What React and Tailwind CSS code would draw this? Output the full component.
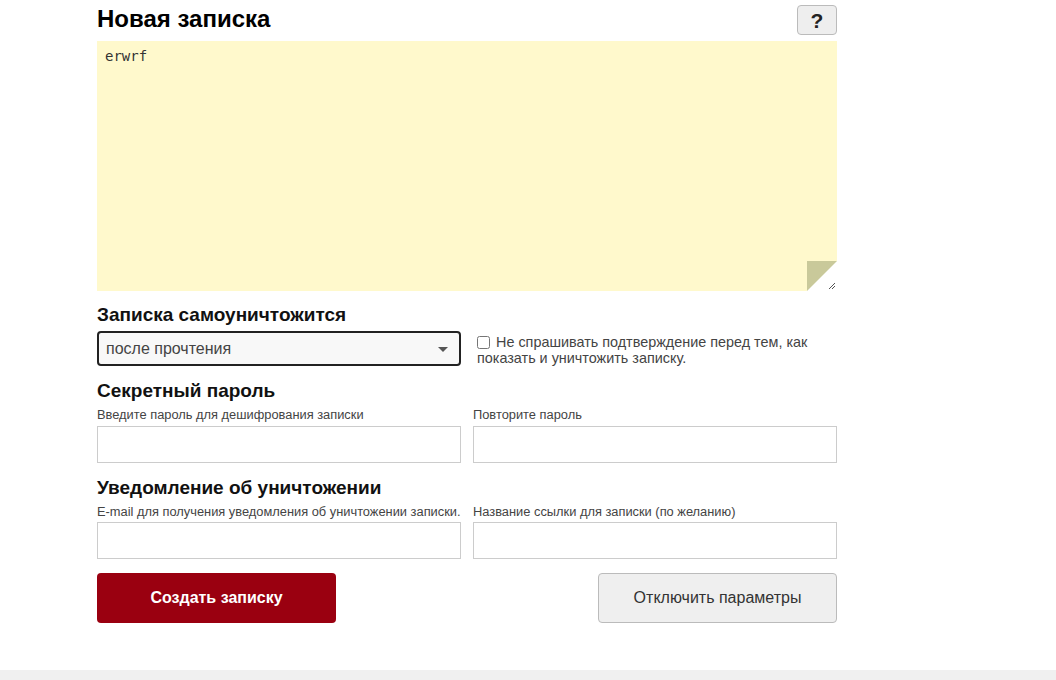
import { useState } from "react";

const App = () => {
  const [text, setText] = useState("erwrf");

  return (
    <div className="min-h-[680px] bg-[#f0f0f0] font-['Liberation_Sans',Arial,sans-serif]">
      <div className="bg-white h-[670px]">
        <div className="w-[740px] ml-[97px] pt-[5px]">
          <div className="flex items-start justify-between h-[36px]">
            <h1 className="text-[24px] font-bold text-black leading-[28px]">Новая записка</h1>
            <button className="w-[40px] h-[30px] rounded-[4px] border border-[#bbb] bg-[#eee] text-[21px] font-bold text-[#222] leading-none">?</button>
          </div>
          <div className="relative h-[250px] bg-[#fff9cc]">
            <textarea
              value={text}
              onChange={(e) => setText(e.target.value)}
              className="w-full h-full resize-none bg-transparent px-[8px] py-[5px] text-[14px] text-[#333] font-['DejaVu_Sans_Mono',monospace] outline-none"
            />
            <div className="absolute right-0 bottom-0 w-[30px] h-[30px] bg-white">
              <div className="w-full h-full bg-[#c9c99a] [clip-path:polygon(0_0,100%_0,0_100%)]"></div>
            </div>
            <svg className="absolute right-[1px] bottom-[1px]" width="9" height="9" viewBox="0 0 9 9">
              <path d="M8 2 L2 8 M8 5 L5 8" stroke="#555" strokeWidth="1" />
            </svg>
          </div>

          <h2 className="mt-[12px] text-[19px] font-bold text-[#111] leading-[24px]">Записка самоуничтожится</h2>
          <div className="flex gap-[12px] mt-[4px]">
            <div className="relative w-[364px] h-[35px] border-2 border-[#222] rounded-[4px] bg-[#f8f8f8] flex items-center px-[7px]">
              <span className="text-[16px] text-[#444]">после прочтения</span>
              <span className="absolute right-[11px] top-[14px] w-0 h-0 border-l-[5px] border-r-[5px] border-t-[5px] border-l-transparent border-r-transparent border-t-[#555]"></span>
            </div>
            <label className="flex-1 text-[14.4px] text-[#444] leading-[16px] pt-[3px] pl-[4px]">
              <input type="checkbox" className="w-[13px] h-[13px] align-[-2px] mr-[6px]" />
              Не спрашивать подтверждение перед тем, как показать и уничтожить записку.
            </label>
          </div>

          <h2 className="mt-[13px] text-[19px] font-bold text-[#111] leading-[24px]">Секретный пароль</h2>
          <div className="grid grid-cols-2 gap-x-[12px] mt-[4px]">
            <div>
              <div className="text-[12.85px] text-[#444] leading-[16px]">Введите пароль для дешифрования записки</div>
              <input type="password" className="mt-[3px] w-full h-[37px] border border-[#ccc] bg-white outline-none px-2" />
            </div>
            <div>
              <div className="text-[12.85px] text-[#444] leading-[16px]">Повторите пароль</div>
              <input type="password" className="mt-[3px] w-full h-[37px] border border-[#ccc] bg-white outline-none px-2" />
            </div>
          </div>

          <h2 className="mt-[13px] text-[19px] font-bold text-[#111] leading-[24px]">Уведомление об уничтожении</h2>
          <div className="grid grid-cols-2 gap-x-[12px] mt-[4px]">
            <div>
              <div className="text-[12.85px] text-[#444] leading-[16px] whitespace-nowrap">E-mail для получения уведомления об уничтожении записки.</div>
              <input type="text" className="mt-[2px] w-full h-[37px] border border-[#ccc] bg-white outline-none px-2" />
            </div>
            <div>
              <div className="text-[12.85px] text-[#444] leading-[16px]">Название ссылки для записки (по желанию)</div>
              <input type="text" className="mt-[2px] w-full h-[37px] border border-[#ccc] bg-white outline-none px-2" />
            </div>
          </div>

          <div className="flex justify-between mt-[14px]">
            <button className="w-[239px] h-[50px] rounded-[4px] bg-[#9a0010] text-white text-[16px] font-bold">Создать записку</button>
            <button className="w-[239px] h-[50px] rounded-[4px] bg-[#efefef] border border-[#bbb] text-[#333] text-[16px]">Отключить параметры</button>
          </div>
        </div>
      </div>
    </div>
  );
};

export default App;
